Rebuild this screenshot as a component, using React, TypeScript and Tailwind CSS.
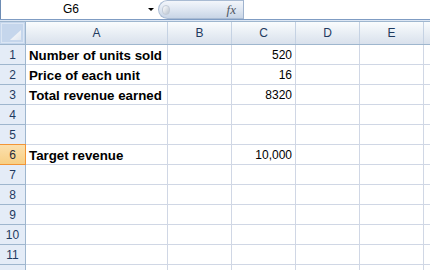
const cols = ["A", "B", "C", "D", "E"];

const rows: { label?: string; value?: string }[] = [
  { label: "Number of units sold", value: "520" },
  { label: "Price of each unit", value: "16" },
  { label: "Total revenue earned", value: "8320" },
  {},
  {},
  { label: "Target revenue", value: "10,000" },
  {},
  {},
  {},
  {},
  {},
  {},
];

const Cells = ({ label, value }: { label?: string; value?: string }) => (
  <>
    <div className="w-[142px] h-full shrink-0 border-r border-[#d0d7e5] flex items-end pl-[3px] pb-[1px] font-['Liberation_Sans',sans-serif] font-bold text-[13.3px] leading-[15px] text-black whitespace-nowrap">
      {label}
    </div>
    <div className="w-[64px] h-full shrink-0 border-r border-[#d0d7e5]" />
    <div className="w-[64px] h-full shrink-0 border-r border-[#d0d7e5] flex items-end justify-end pr-[3px] pb-[1px] font-['Liberation_Sans',sans-serif] text-[12px] leading-[15px] text-black">
      {value}
    </div>
    <div className="w-[64px] h-full shrink-0 border-r border-[#d0d7e5]" />
    <div className="w-[64px] h-full shrink-0 border-r border-[#d0d7e5]" />
    <div className="flex-1 h-full" />
  </>
);

export default function App() {
  return (
    <div className="w-[430px] h-[270px] overflow-hidden bg-white font-['Liberation_Sans',sans-serif]">
      {/* name box + formula bar */}
      <div className="flex h-[20px] border-b border-[#7f9cc3] bg-white">
        <div className="w-[158px] shrink-0 flex items-center border-l border-[#6d8cb4]">
          <div className="w-[140px] text-center text-[12px] leading-[19px] text-black">G6</div>
          <div className="w-0 h-0 border-l-[3px] border-r-[3px] border-t-[3px] border-l-transparent border-r-transparent border-t-black ml-[7px]" />
        </div>
        <div className="w-[85px] shrink-0 rounded-l-full bg-gradient-to-b from-[#f3f6fb] via-[#dfe7f2] to-[#c8d5e6] border border-r-0 border-[#a9bbd3] flex items-center">
          <div className="w-[8px] h-[10px] ml-[3px] rounded-full bg-gradient-to-br from-white to-[#b9c3cf] border border-[#c3ccd8]" />
          <span className="ml-auto mr-[7px] font-['Liberation_Serif',serif] italic text-[13px] leading-[15px] text-[#4f5660]">fx</span>
        </div>
        <div className="flex-1 border-l border-[#9fb3ce] bg-white" />
      </div>
      <div className="h-[1px] bg-[#dde7f4]" />

      {/* column headers */}
      <div className="flex h-[24px] border-t border-[#9eb6ce] border-b border-b-[#9eb6ce]">
        <div className="w-[26px] shrink-0 h-full border-r border-[#9eb6ce] bg-[#c5d6ec] relative">
          <div className="absolute inset-[1px] border border-[#dbe6f4]" />
          <svg className="absolute right-[4px] bottom-[4px]" width="11" height="10" viewBox="0 0 11 10">
            <defs>
              <linearGradient id="tri" x1="0" y1="0" x2="1" y2="1">
                <stop offset="0" stopColor="#ffffff" />
                <stop offset="1" stopColor="#dfe6ef" />
              </linearGradient>
            </defs>
            <polygon points="11,0 11,10 0,10" fill="url(#tri)" />
          </svg>
        </div>
        {cols.map((c, i) => (
          <div
            key={c}
            className={`${i === 0 ? "w-[142px]" : "w-[64px]"} shrink-0 h-full border-r border-[#c5d2e3] bg-gradient-to-b from-[#f9fcfd] to-[#d9e1ec] flex items-center justify-center text-[12px] text-[#1f3a5f]`}
          >
            {c}
          </div>
        ))}
        <div className="flex-1 h-full bg-gradient-to-b from-[#f9fcfd] to-[#d9e1ec]" />
      </div>

      {/* rows */}
      {rows.map((r, i) => {
        const active = i === 5;
        return (
          <div key={i} className="flex h-[20px] border-b border-[#d0d7e5]">
            <div
              className={
                active
                  ? "w-[26px] shrink-0 h-[21px] -mt-[1px] border border-l-0 border-[#f29536] bg-gradient-to-b from-[#fbe0ad] to-[#f8cf84] flex items-center justify-center text-[12px] text-[#1f2a3a]"
                  : "w-[26px] shrink-0 h-[20px] -mb-[1px] border-r border-b border-[#9eb6ce] bg-[#e4ecf7] flex items-center justify-center text-[12px] text-[#1f3a5f]"
              }
            >
              {i < 11 ? i + 1 : ""}
            </div>
            <Cells label={r.label} value={r.value} />
          </div>
        );
      })}
    </div>
  );
}
